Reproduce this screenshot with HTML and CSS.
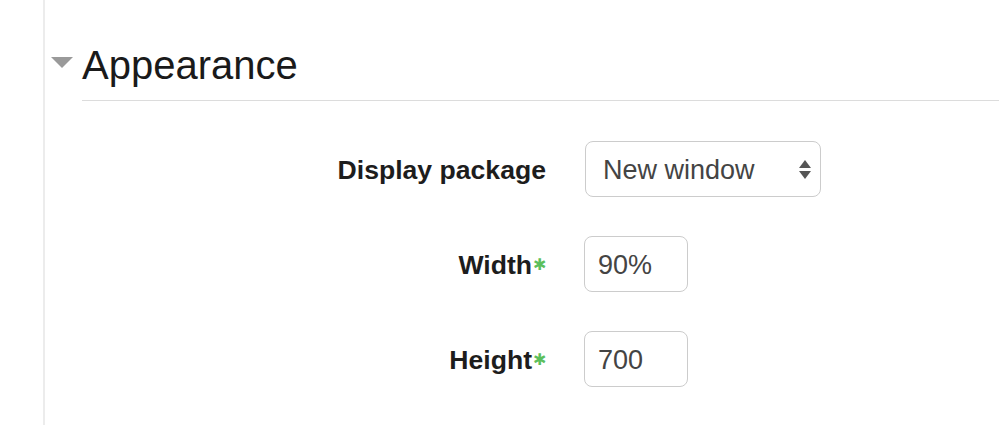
FILE: index.html
```html
<!DOCTYPE html>
<html>
<head>
<meta charset="utf-8">
<link rel="stylesheet" href="styles.css">
</head>
<body>
<div class="fieldset">
  <div class="legend">
    <span class="caret"></span>
    <div class="title">Appearance</div>
  </div>
  <div class="form">
    <div class="row">
      <label class="label">Display package</label>
      <div class="select">
        <span class="select-text">New window</span>
        <span class="arrows"><span class="up"></span><span class="down"></span></span>
      </div>
    </div>
    <div class="row">
      <label class="label">Width<span class="req">&#10033;</span></label>
      <div class="input">90%</div>
    </div>
    <div class="row">
      <label class="label">Height<span class="req">&#10033;</span></label>
      <div class="input">700</div>
    </div>
  </div>
</div>
</body>
</html>
```
FILE: styles.css
```css
html, body {
  margin: 0;
  padding: 0;
  background: #fff;
  height: 100%;
  overflow: hidden;
}
body {
  font-family: "Liberation Sans", Arial, sans-serif;
  color: #1d1d1d;
}
.fieldset {
  margin-left: 43px;
  border-left: 2px solid #ececec;
  height: 425px;
  padding-top: 42px;
  box-sizing: border-box;
}
.legend {
  display: flex;
  align-items: flex-start;
}
.caret {
  width: 0;
  height: 0;
  border-left: 11px solid transparent;
  border-right: 11px solid transparent;
  border-top: 11px solid #9a9a9a;
  margin: 15px 9px 0 6px;
}
.title {
  flex: 1;
  font-size: 40px;
  line-height: 46px;
  padding-bottom: 12px;
  border-bottom: 1px solid #dcdcdc;
  color: #1a1a1a;
}
.form {
  margin-top: 40px;
  display: flex;
  flex-direction: column;
  gap: 39px;
}
.row {
  display: flex;
  align-items: center;
  gap: 38px;
}
.label {
  width: 501px;
  text-align: right;
  font-weight: bold;
  font-size: 26.6px;
  color: #1d1d1d;
  padding-top: 3px;
}
.req {
  color: #5cbf5c;
  font-size: 16px;
  font-weight: normal;
  vertical-align: 4px;
  margin-left: 1px;
}
.select {
  width: 236px;
  height: 56px;
  box-sizing: border-box;
  border: 1px solid #cccccc;
  border-radius: 8px;
  display: flex;
  align-items: center;
  justify-content: space-between;
  padding: 2px 9px 0 17px;
  font-size: 27px;
  color: #444;
  margin-left: 1px;
}
.arrows {
  display: flex;
  flex-direction: column;
  gap: 3px;
  margin-top: -2px;
}
.up {
  width: 0;
  height: 0;
  border-left: 6px solid transparent;
  border-right: 6px solid transparent;
  border-bottom: 8px solid #555;
}
.down {
  width: 0;
  height: 0;
  border-left: 6px solid transparent;
  border-right: 6px solid transparent;
  border-top: 8px solid #555;
}
.input {
  width: 104px;
  height: 56px;
  box-sizing: border-box;
  border: 1px solid #cccccc;
  border-radius: 8px;
  display: flex;
  align-items: center;
  padding: 2px 0 0 13px;
  font-size: 27px;
  color: #444;
}
```
